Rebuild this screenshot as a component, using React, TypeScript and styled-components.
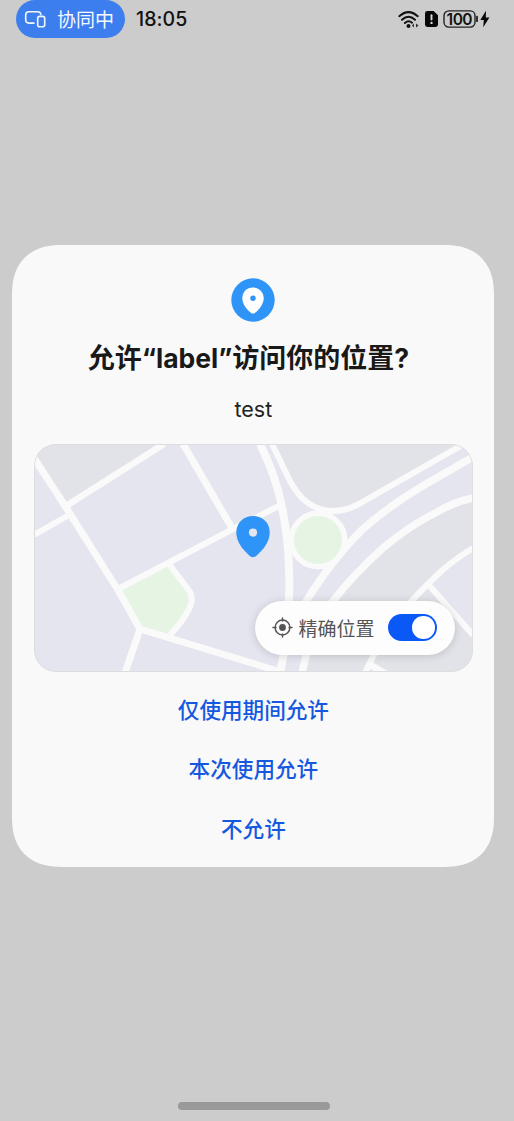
import React from "react";
import styled, { createGlobalStyle } from "styled-components";

const GlobalStyle = createGlobalStyle`
  * { box-sizing: border-box; }
  body {
    margin: 0;
    background: #cccccc;
    font-family: "Noto Sans CJK SC", "Noto Sans", sans-serif;
  }
`;

const Screen = styled.div`
  height: 1121px;
  width: 514px;
  display: flex;
  flex-direction: column;
  background: #cccccc;
  overflow: hidden;
`;

const StatusBar = styled.header`
  display: flex;
  align-items: center;
  height: 38px;
  padding: 0 23.5px 0 16px;
`;

const CastChip = styled.div`
  display: flex;
  align-items: center;
  gap: 10px;
  width: 109px;
  height: 38px;
  padding-left: 8px;
  border-radius: 19px;
  background: #3d7eee;
  color: #f4f8ff;
  font-size: 19px;
  line-height: 36px;
  white-space: nowrap;
`;

const Clock = styled.time`
  margin-left: 11px;
  flex: 1;
  color: #111;
  font: 500 19.5px/38px Inter, sans-serif;
  letter-spacing: 0.1px;
`;

const StatusIcons = styled.div`
  display: flex;
  align-items: center;
  gap: 5px;
`;

const Dialog = styled.main`
  display: flex;
  flex-direction: column;
  align-items: center;
  width: 482px;
  height: 622px;
  margin: 207px 0 0 12.4px;
  padding-top: 32.5px;
  border-radius: 50px;
  background: #f9f9f9;
  corner-shape: superellipse(1.25);
`;

const Title = styled.h1`
  display: flex;
  align-items: baseline;
  margin: 14.5px 0 0;
  padding-right: 10px;
  height: 42px;
  color: #191919;
  font-size: 27px;
  font-weight: 700;
  line-height: 42px;
  white-space: nowrap;
`;

const Latin = styled.span`
  font-family: Inter, sans-serif;
  font-size: 26.5px;
  font-weight: 650;
  letter-spacing: 0;
`;

const Reason = styled.p`
  margin: 12.5px 0 0;
  height: 36px;
  color: #222;
  font: 21.5px/36px Inter, sans-serif;
`;

const MapCard = styled.section`
  display: grid;
  width: 439px;
  height: 228px;
  margin-top: 17.5px;
  border-radius: 22px;
  overflow: hidden;
  background: #e4e5ee;

  > * { grid-area: 1 / 1; }
`;

const PreciseToggle = styled.label`
  align-self: end;
  justify-self: end;
  display: flex;
  align-items: center;
  width: 200px;
  height: 54px;
  margin: 0 17.5px 17.5px 0;
  padding: 0 18.5px 0 17px;
  border-radius: 27px;
  background: #fdfdfe;
  box-shadow: 0 1px 8px rgba(0, 0, 0, 0.16);
  z-index: 1;
`;

const ToggleText = styled.span`
  flex: 1;
  margin: 0 0 0 5px;
  color: #555;
  font-size: 19px;
  line-height: 28px;
  white-space: nowrap;
`;

const Switch = styled.span`
  display: flex;
  justify-content: flex-end;
  align-items: center;
  width: 49px;
  height: 27px;
  padding: 2px;
  border-radius: 14px;
  background: #0a59f7;
`;

const Knob = styled.span`
  width: 22.5px;
  height: 22.5px;
  border-radius: 50%;
  background: #fff;
`;

const Actions = styled.nav`
  display: flex;
  flex-direction: column;
  align-items: center;
  gap: 19.5px;
  margin-top: 16.5px;
`;

const Action = styled.button`
  height: 40px;
  padding: 0 16px;
  border: 0;
  background: none;
  color: #1558e0;
  font: 500 21.6px/40px "Noto Sans CJK SC", sans-serif;
`;

const HomeIndicator = styled.div`
  width: 152px;
  height: 8.5px;
  margin: auto 0 11px 178px;
  border-radius: 5px;
  background: #999;
`;

const DevicesIcon = () => (
  <svg width="23" height="20" viewBox="0 0 23 20" fill="none" stroke="#f4f8ff" strokeWidth="1.6" strokeLinecap="round">
    <path d="M10 14.1H5Q1.7 14.1 1.7 10.8V6Q1.7 2.7 5 2.7H13.5Q16.8 2.7 16.8 5.4" />
    <rect x="13.7" y="7.4" width="7" height="10.3" rx="2" />
  </svg>
);

const WifiIcon = () => (
  <svg width="22" height="19" viewBox="0 0 22 19" fill="none" stroke="#111" strokeWidth="2" strokeLinecap="round">
    <path d="M1.3 6.2Q10.5-2 19.7 6.2M4 9.8Q10.5 3.8 17 9.8M6.9 13Q10.5 9.8 14 12.7" />
    <circle cx="10.5" cy="16" r="2" fill="#111" stroke="none" />
    <path d="M16 13.5v4L13.9 15.5ZM18 13.5v4L20.6 15.5Z" fill="#333" stroke="none" />
  </svg>
);

const SimAlertIcon = () => (
  <svg width="13" height="16" viewBox="0 0 13 16">
    <path d="M2.3 0H8.6L13 4.2V13.6Q13 16 10.7 16H2.3Q0 16 0 13.6V2.4Q0 0 2.3 0Z" fill="#080808" />
    <path d="M6.5 4.2V8.6" stroke="#d8d8d8" strokeWidth="1.9" strokeLinecap="round" />
    <circle cx="6.5" cy="11.9" r="1.2" fill="#d8d8d8" />
  </svg>
);

const BatteryIcon = () => (
  <svg width="48" height="20" viewBox="0 0 48 20">
    <rect x="1" y="1.9" width="31" height="16.2" rx="4.8" fill="none" stroke="#222" strokeWidth="1.4" />
    <path d="M34 7.7v4.5" stroke="#222" strokeWidth="1.8" strokeLinecap="round" />
    <text x="16.6" y="15.5" textAnchor="middle" fill="#111" fontFamily="Inter, sans-serif" fontSize="15.5" fontWeight="600" textLength="26">100</text>
    <path d="M43 1.8L37.3 11h3.5L40.2 18.2L46.4 8.5h-3.6Z" fill="#080808" />
  </svg>
);

const LocationBadge = () => (
  <svg width="44" height="44" viewBox="0 0 44 44">
    <circle cx="22" cy="22" r="21.7" fill="#2f94f7" />
    <path d="M22 9.6C15.7 9.6 11.3 14.3 11.3 20.2C11.3 26.2 15.8 31.3 19.9 34.7Q22 36.4 24.1 34.7C28.2 31.3 32.7 26.2 32.7 20.2C32.7 14.3 28.3 9.6 22 9.6Z" fill="#fff" />
    <circle cx="22" cy="20.2" r="2.7" fill="#2f94f7" />
  </svg>
);

const TargetIcon = () => (
  <svg width="21" height="21" viewBox="0 0 21 21" fill="none" stroke="#555" strokeWidth="1.5" strokeLinecap="round">
    <circle cx="10.5" cy="10.5" r="7.4" />
    <circle cx="10.5" cy="10.5" r="3.4" fill="#555" stroke="none" />
    <path d="M10.5 1v3M10.5 17v3M1 10.5h3M17 10.5h3" />
  </svg>
);

const MapArt = () => (
  <svg width="439" height="228" viewBox="0 0 439 228">
    <g fill="#e2e3e8">
      <path d="M0 0H127L33 60L1 12Z" />
      <path d="M238 0L259 43Q274 66 299 67Q312 67 323 61L426 3L432 0Z" />
      <path d="M439 54Q420 58 403 68Q375 82 349 104Q320 129 299 156L268 228H331L378 156L396 138L439 105Z" />
      <path d="M393 139L378 156L331 228H439V189Z" />
    </g>
    <path d="M393 139L439 105V190Z" fill="#e4e5ee" />
    <path d="M84 144L134 119L155 148Q159 155 154 168L136 191L106 184Z" fill="#e5f4e3" />
    <g fill="none" stroke="#fafafa" strokeWidth="7">
      <path d="M0 14L33 65L84 146L106 185L221 220L250 229" strokeLinejoin="round" />
      <path d="M106 185L91 229" />
      <path d="M32 62L130 0" strokeWidth="6.5" />
      <path d="M0 91L35 71" strokeWidth="6" />
      <path d="M149 0L198 84" />
      <path d="M84 145L201 84L249 60" strokeWidth="6" />
      <path d="M134 119L154 145Q161 154 155 165Q150 176 136 191" strokeWidth="6" />
      <path d="M226 0Q237 22 244 46Q254 84 255 125Q257 180 246 229" strokeWidth="8" />
      <path d="M238 0L255 35Q271 67 299 67Q311 67 323 61L430 0" strokeWidth="6" />
      <path d="M439 13L392 40Q356 61 329 85Q300 113 273 156L255 188" strokeWidth="7.5" />
      <path d="M439 54Q420 58 403 68Q375 82 349 104Q320 130 299 157Q276 188 268 229" strokeWidth="7.5" />
      <path d="M439 104Q414 119 396 138Q354 178 331 229" strokeWidth="6" />
      <path d="M393 139L439 191" strokeWidth="6" />
      <path d="M333 219L352 230" />
    </g>
    <circle cx="284" cy="96" r="26.7" fill="#e5f4e3" stroke="#fafafa" strokeWidth="5.6" />
    <path d="M219 72C209.3 72 202.3 79 202.3 88.5C202.3 98 209 106 215.8 111.9Q219 114.5 222.2 111.9C229 106 235.7 98 235.7 88.5C235.7 79 228.7 72 219 72Z" fill="#2f94f7" />
    <circle cx="219" cy="88.6" r="4.1" fill="#e4e5ee" />
    <rect x="0.5" y="0.5" width="438" height="227" rx="21.5" fill="none" stroke="#dddddf" />
  </svg>
);

const options = ["仅使用期间允许", "本次使用允许", "不允许"];

export default function App() {
  return (
    <Screen>
      <GlobalStyle />
      <StatusBar>
        <CastChip>
          <DevicesIcon />
          协同中
        </CastChip>
        <Clock>18:05</Clock>
        <StatusIcons>
          <WifiIcon />
          <SimAlertIcon />
          <BatteryIcon />
        </StatusIcons>
      </StatusBar>
      <Dialog>
        <LocationBadge />
        <Title>
          允许
          <Latin>“label”</Latin>
          访问你的位置
          <Latin>?</Latin>
        </Title>
        <Reason>test</Reason>
        <MapCard>
          <MapArt />
          <PreciseToggle>
            <TargetIcon />
            <ToggleText>精确位置</ToggleText>
            <Switch>
              <Knob />
            </Switch>
          </PreciseToggle>
        </MapCard>
        <Actions>
          {options.map((o) => (
            <Action key={o}>{o}</Action>
          ))}
        </Actions>
      </Dialog>
      <HomeIndicator />
    </Screen>
  );
}
